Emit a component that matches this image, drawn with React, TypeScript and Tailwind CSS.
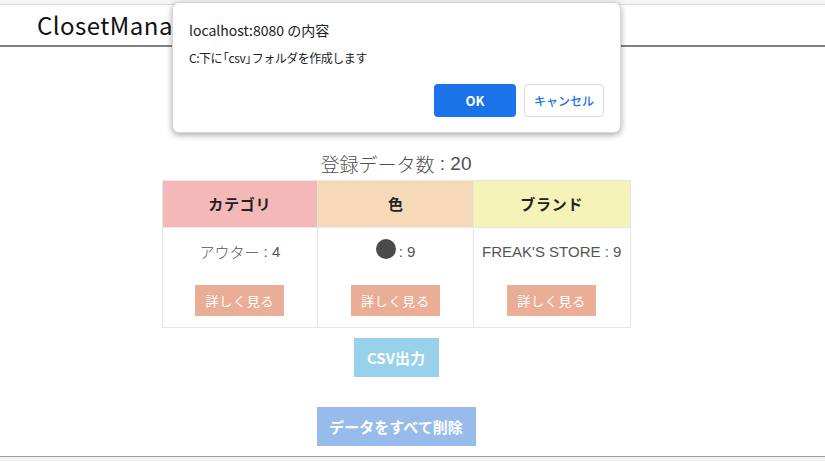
import React from "react";

const jp = { fontFamily: '"Noto Sans CJK JP", "Noto Sans", sans-serif' };
const mix = { fontFamily: '"Liberation Sans", "Noto Sans CJK JP", sans-serif' };

function DetailButton() {
  return (
    <button className="w-[89px] h-[31px] bg-[#eaae97] text-white text-[13px] leading-none tracking-[0.06em]" style={jp}>
      詳しく見る
    </button>
  );
}

export default function App() {
  return (
    <div className="relative w-[825px] h-[461px] bg-white overflow-hidden" style={jp}>
      <div className="h-[5px] bg-[#f4f4f4] border-b border-[#dcdcdc]" />
      <header className="h-[42px] border-b-2 border-[#808080] pl-[37px] flex items-center">
        <span className="text-[24px] leading-none text-[#111] tracking-[0.02em]">ClosetManager</span>
      </header>

      <main className="w-[792px] flex flex-col items-center">
        <div className="mt-[104px] h-[24px] flex items-center text-[19px] leading-none text-[#505050] whitespace-pre" style={mix}>
          <span style={jp} className="font-light">登録データ数</span> : 20
        </div>
        <div className="mt-[5px] grid grid-cols-3 w-[469px] border border-[#e6e6e6]">
          <div className="h-[46px] bg-[#f5b8b8] flex items-center justify-center font-bold text-[15px] text-[#222] border-r border-[#e6e6e6] tracking-[0.05em]">
            カテゴリ
          </div>
          <div className="h-[46px] bg-[#f5d9b8] flex items-center justify-center font-bold text-[15px] text-[#222] border-r border-[#e6e6e6]">
            色
          </div>
          <div className="h-[46px] bg-[#f5f3b8] flex items-center justify-center font-bold text-[15px] text-[#222] tracking-[0.05em]">
            ブランド
          </div>

          <div className="h-[100px] flex flex-col items-center border-r border-[#e6e6e6] border-t">
            <div className="mt-[12px] h-[22px] flex items-center text-[15px] leading-none text-[#555] whitespace-pre" style={mix}>
              <span style={jp} className="font-light">アウター</span> : 4
            </div>
            <div className="mt-[23px] flex"><DetailButton /></div>
          </div>
          <div className="h-[100px] flex flex-col items-center border-r border-[#e6e6e6] border-t">
            <div className="mt-[12px] h-[22px] flex items-center text-[15px] leading-none text-[#555]" style={mix}>
              <span className="inline-block w-[20px] h-[20px] rounded-full bg-[#4a4a4a] -mt-[5px] mr-[3px]" />
              <span>: 9</span>
            </div>
            <div className="mt-[23px] flex"><DetailButton /></div>
          </div>
          <div className="h-[100px] flex flex-col items-center border-t border-[#e6e6e6]">
            <div className="mt-[12px] h-[22px] flex items-center text-[15px] leading-none text-[#555] whitespace-nowrap" style={mix}>FREAK'S STORE : 9</div>
            <div className="mt-[23px] flex"><DetailButton /></div>
          </div>
        </div>

        <button className="mt-[10px] w-[85px] h-[39px] bg-[#97d1eb] text-white font-bold text-[15px] leading-none">
          CSV出力
        </button>
        <button className="mt-[30px] w-[159px] h-[39px] bg-[#97bbea] text-white font-bold text-[15px] leading-none">
          データをすべて削除
        </button>
      </main>

      <div className="absolute left-0 right-0 top-[456px] h-[5px] bg-[#f4f4f4] border-t border-[#9a9a9a]" />

      <div className="absolute left-[172px] top-[2px] w-[449px] h-[131px] bg-white rounded-[7px] border border-[#d8d8d8] shadow-[0_2px_6px_rgba(0,0,0,0.35)]">
        <div className="absolute left-[16px] top-[17px] text-[14px] leading-[20px] text-[#202124]">localhost:8080 の内容</div>
        <div className="absolute left-[16px] top-[46px] text-[12px] leading-[18px] text-[#202124] tracking-[-0.04em] whitespace-nowrap">
          C:下に<span className="inline-block -ml-[5px]">「</span>csv<span className="inline-block -mr-[5px]">」</span>フォルダを作成します
        </div>
        <div className="absolute right-[16px] top-[81px] flex gap-[8px]">
          <button className="w-[82px] h-[33px] rounded-[4px] bg-[#1a73e8] text-white font-bold text-[13px] leading-none">OK</button>
          <button className="w-[80px] h-[33px] rounded-[4px] bg-white border border-[#dadce0] text-[#1a73e8] font-medium text-[12px] leading-none">キャンセル</button>
        </div>
      </div>
    </div>
  );
}
